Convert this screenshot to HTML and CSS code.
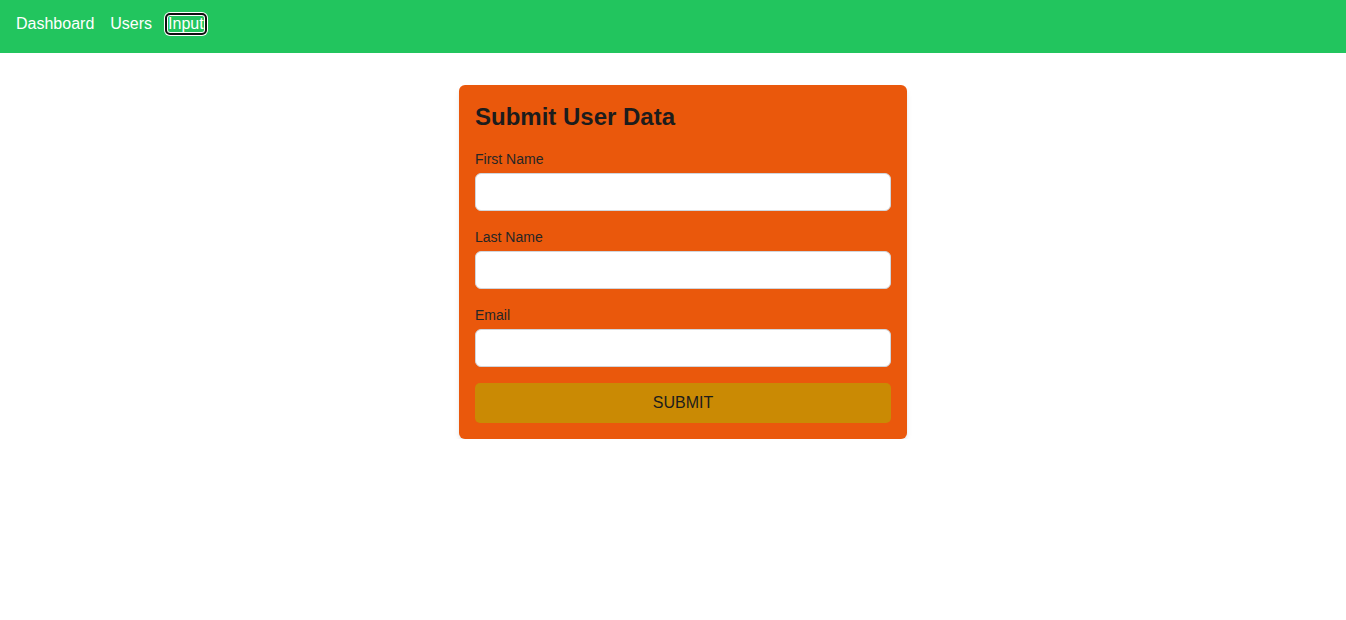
FILE: index.html
```html
<!DOCTYPE html>
<html lang="en">
<head>
<meta charset="utf-8">
<title>Submit User Data</title>
<link rel="stylesheet" href="styles.css">
</head>
<body>
<nav class="navbar">
  <a class="nav-link" href="#">Dashboard</a>
  <a class="nav-link" href="#">Users</a>
  <a class="nav-link is-focused" href="#">Input</a>
</nav>
<main class="page">
  <form class="card">
    <h2 class="card-title">Submit User Data</h2>
    <div class="field">
      <label class="field-label">First Name</label>
      <input class="field-input" type="text">
    </div>
    <div class="field">
      <label class="field-label">Last Name</label>
      <input class="field-input" type="text">
    </div>
    <div class="field">
      <label class="field-label">Email</label>
      <input class="field-input" type="email">
    </div>
    <button class="submit-btn" type="button">Submit</button>
  </form>
</main>
</body>
</html>
```
FILE: styles.css
```css
* { box-sizing: border-box; }
body {
  margin: 0;
  font-family: "Liberation Sans", Arial, sans-serif;
  background: #ffffff;
}
.navbar {
  height: 53px;
  background: #22c55e;
  padding: 15px 16px 0;
  display: flex;
  align-items: flex-start;
  gap: 16px;
}
.nav-link {
  color: #ffffff;
  text-decoration: none;
  font-size: 16px;
  line-height: normal;
}
.nav-link.is-focused {
  padding: 0 1px;
  margin-left: -1px;
  border-radius: 3px;
  outline: 2px solid #101010;
  outline-offset: 0;
  box-shadow: inset 0 0 0 1px #ffffff, 0 0 0 3px #ffffff;
}
.page {
  display: flex;
  justify-content: center;
  padding-top: 32px;
  padding-left: 20px;
}
.card {
  width: 448px;
  background: #ea580c;
  border-radius: 6px;
  padding: 16px;
  box-shadow: 0 4px 6px -1px rgba(0,0,0,0.1), 0 2px 4px -2px rgba(0,0,0,0.1);
  display: flex;
  flex-direction: column;
}
.card-title {
  margin: 0 0 16px;
  font-size: 24px;
  line-height: 32px;
  font-weight: 700;
  color: #1c1c1c;
}
.field {
  display: flex;
  flex-direction: column;
  margin-bottom: 16px;
}
.field-label {
  font-size: 14px;
  line-height: 20px;
  color: #262626;
  margin-bottom: 4px;
}
.field-input {
  height: 38px;
  width: 100%;
  background: #ffffff;
  border: 1px solid #d1d5db;
  border-radius: 6px;
  padding: 8px;
  font-size: 16px;
  font-family: inherit;
}
.submit-btn {
  height: 40px;
  width: 100%;
  border: none;
  border-radius: 5px;
  background: #ca8a04;
  color: #1c1c1c;
  font-family: inherit;
  font-size: 16px;
  text-transform: uppercase;
  cursor: pointer;
}
```
